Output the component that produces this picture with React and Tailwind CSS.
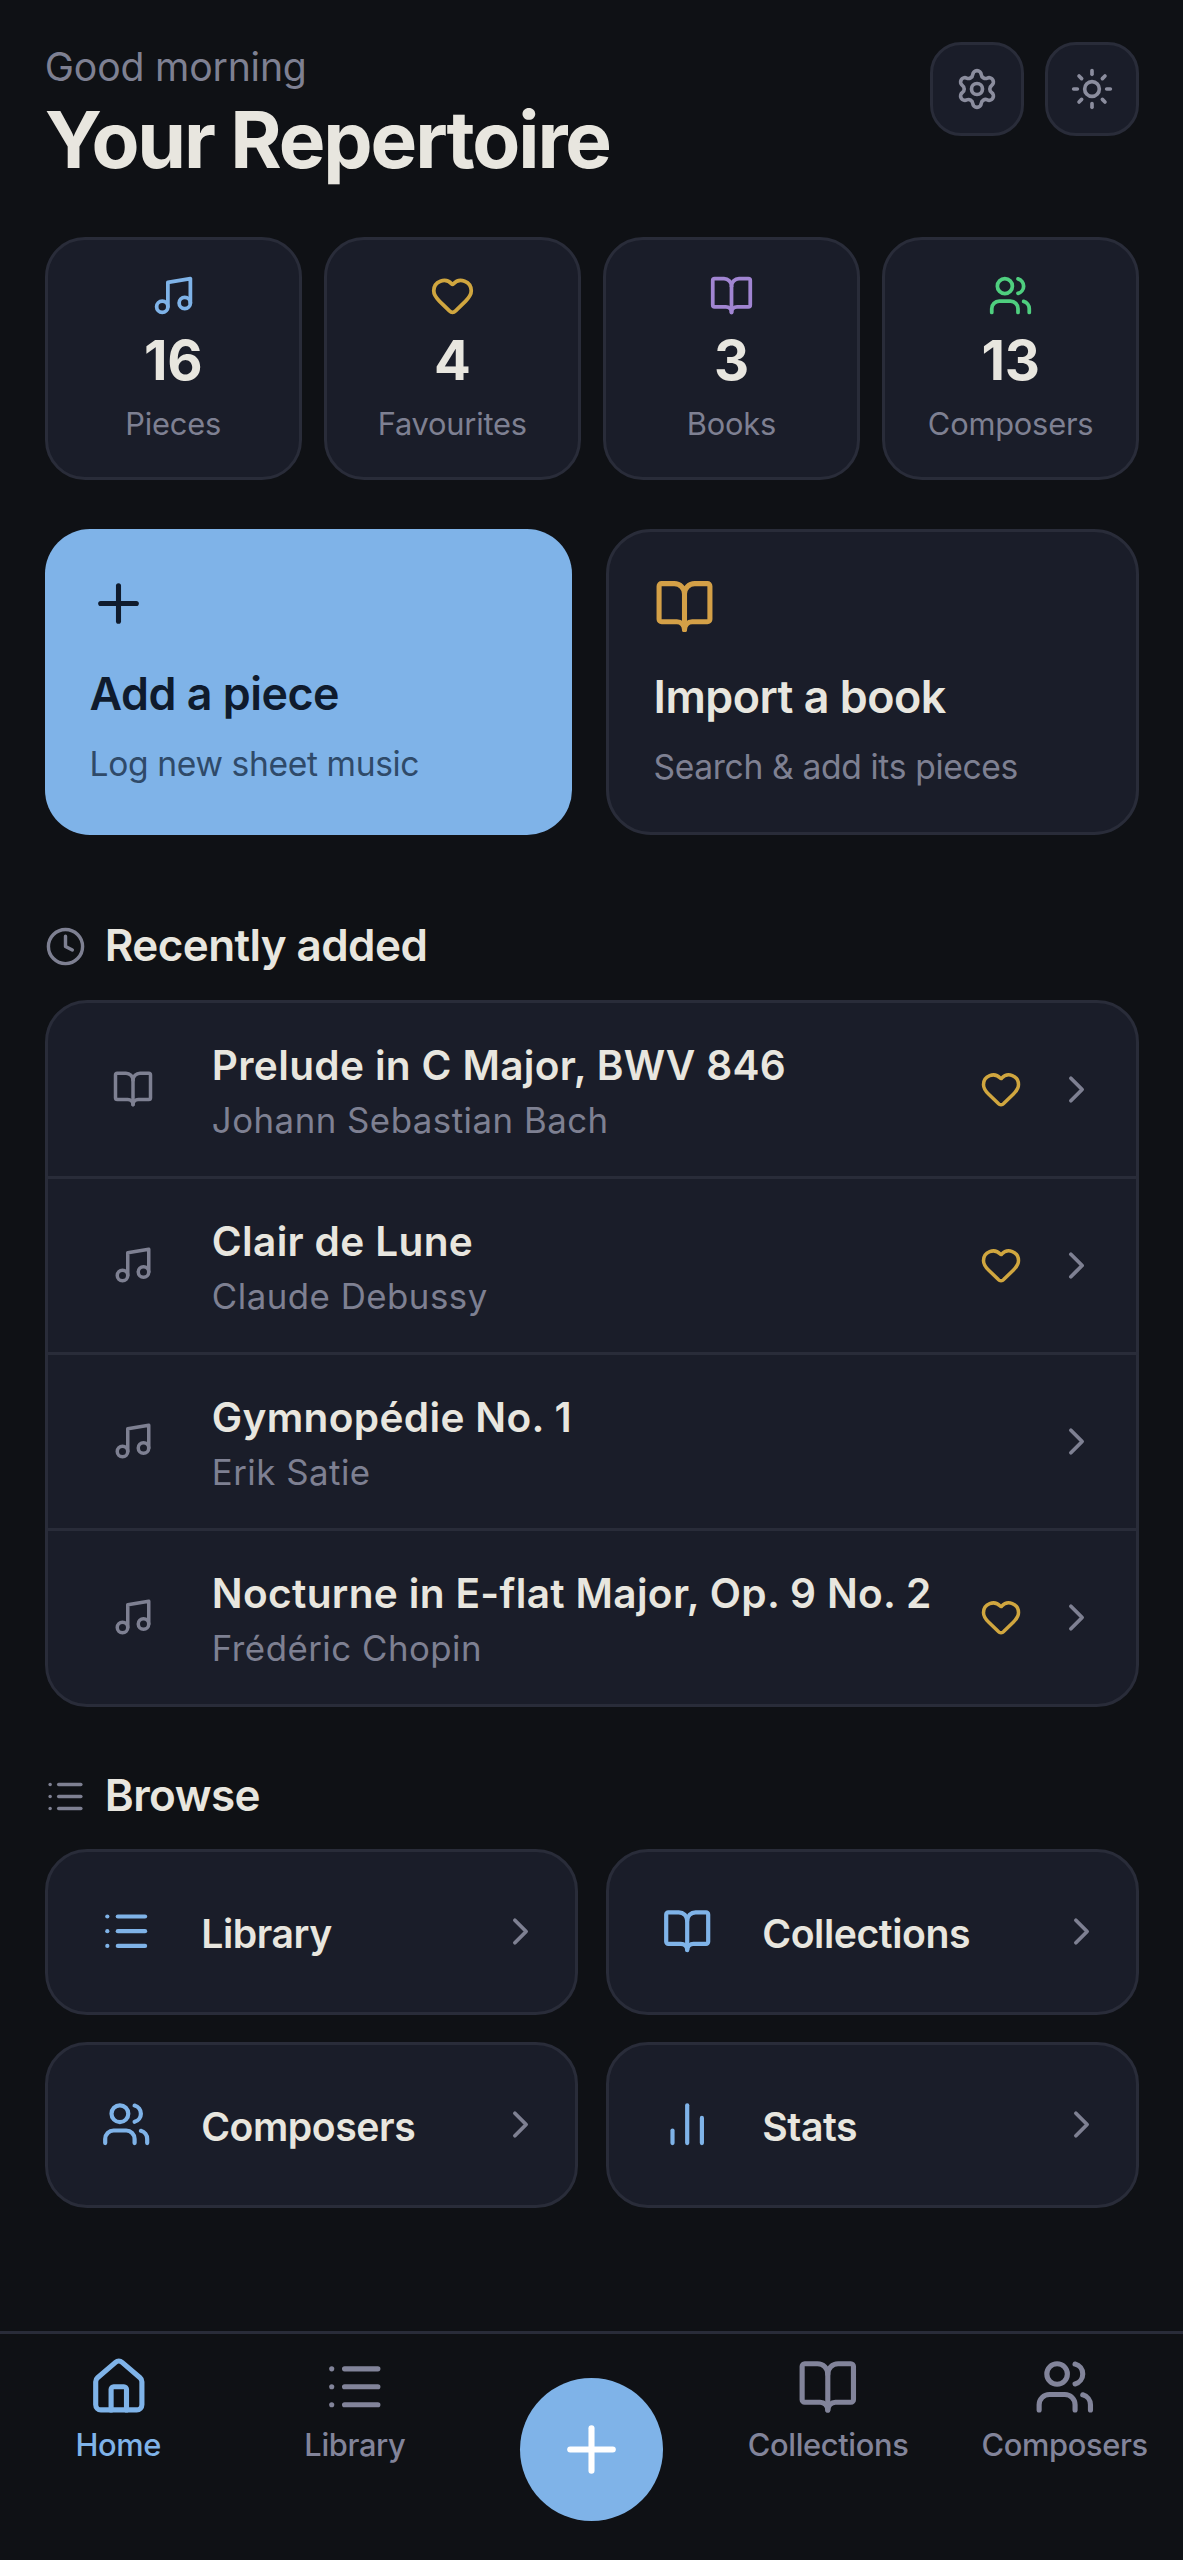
import {
  BookOpen,
  ChartNoAxesColumn,
  ChevronRight,
  Clock,
  Heart,
  House,
  List,
  Music,
  Plus,
  Settings,
  Sun,
  Users,
} from "lucide-react";

const stats = [
  { icon: Music, value: 16, label: "Pieces", color: "text-[#7fb3e8]" },
  { icon: Heart, value: 4, label: "Favourites", color: "text-[#d0a63f]" },
  { icon: BookOpen, value: 3, label: "Books", color: "text-[#a185d2]" },
  { icon: Users, value: 13, label: "Composers", color: "text-[#4fcf7f]" },
];

const recent = [
  { icon: BookOpen, title: "Prelude in C Major, BWV 846", composer: "Johann Sebastian Bach", favourite: true },
  { icon: Music, title: "Clair de Lune", composer: "Claude Debussy", favourite: true },
  { icon: Music, title: "Gymnopédie No. 1", composer: "Erik Satie", favourite: false },
  { icon: Music, title: "Nocturne in E-flat Major, Op. 9 No. 2", composer: "Frédéric Chopin", favourite: true },
];

const browse = [
  { icon: List, label: "Library" },
  { icon: BookOpen, label: "Collections" },
  { icon: Users, label: "Composers" },
  { icon: ChartNoAxesColumn, label: "Stats" },
];

function IconButton({ icon: Icon }) {
  return (
    <button className="flex h-[94px] w-[94px] items-center justify-center rounded-[31px] border-3 border-[#292c39] bg-[#1a1d29] text-[#8b8d9e]">
      <Icon size={44} />
    </button>
  );
}

function SectionTitle({ icon: Icon, children }) {
  return (
    <div className="flex h-[54px] items-center">
      <Icon size={41} className="mt-[3px] text-[#7e8092]" />
      <h2 className="ml-[19px] text-[44px] leading-[54px] font-semibold tracking-[-0.6px]">{children}</h2>
    </div>
  );
}

function Tab({ icon: Icon, label, active }) {
  return (
    <a className={`flex flex-1 flex-col items-center pt-[22px] ${active ? "text-[#7fb3e8]" : "text-[#82849a]"}`}>
      <Icon size={61.6} />
      <span className="mt-2 text-[30.8px] leading-[38px] font-medium tracking-[-0.35px]">{label}</span>
    </a>
  );
}

export default function App() {
  return (
    <div className="flex h-[2560px] w-[1183px] flex-col overflow-hidden bg-[#0f1115] font-['Inter',sans-serif] text-[#e8e6df]">
      <main className="pt-[42px] pr-[44px] pl-[44.8px]">
        <header className="flex h-[195px] items-start justify-between">
          <div>
            <p className="text-[39.2px] leading-[50px] tracking-[-0.2px] text-[#7e8092]">Good morning</p>
            <h1 className="mt-[5px] text-[78.4px] leading-[86px] font-bold tracking-[-0.027em]">Your Repertoire</h1>
          </div>
          <div className="flex gap-[21px]">
            <IconButton icon={Settings} />
            <IconButton icon={Sun} />
          </div>
        </header>

        <section className="grid grid-cols-4 gap-[22.4px]">
          {stats.map(({ icon: Icon, value, label, color }) => (
            <div key={label} className="flex h-[243px] flex-col items-center rounded-[40px] border-3 border-[#292c39] bg-[#1a1d29] pt-[33px]">
              <Icon size={45} className={color} />
              <span className="mt-[14px] text-[54.5px] leading-[56px] font-bold tracking-[-0.2px]">{value}</span>
              <span className="mt-[17px] text-[30.8px] leading-[38px] tracking-[-0.2px] text-[#7e8092]">{label}</span>
            </div>
          ))}
        </section>

        <section className="mt-[48.5px] flex gap-[33.6px]">
          <div className="h-[306px] flex-1 rounded-[45px] bg-[#7fb3e8] p-[44.8px] text-[#0f1b2d]">
            <Plus size={61} className="-ml-[2px]" />
            <h3 className="mt-[33px] text-[44.8px] leading-[54px] font-semibold tracking-[-0.5px]">Add a piece</h3>
            <p className="mt-[23px] text-[33.6px] leading-[40px] tracking-[-0.36px] whitespace-nowrap text-[#2f4a69]">Log new sheet music</p>
          </div>
          <div className="h-[306px] flex-1 rounded-[45px] border-3 border-[#292c39] bg-[#1a1d29] p-[44.8px]">
            <BookOpen size={61} className="text-[#d4a047]" />
            <h3 className="mt-[33px] text-[44.8px] leading-[54px] font-semibold tracking-[-0.5px]">Import a book</h3>
            <p className="mt-[23px] text-[33.6px] leading-[40px] tracking-[-0.33px] whitespace-nowrap text-[#7e8092]">Search &amp; add its pieces</p>
          </div>
        </section>

        <section className="mt-[83px]">
          <SectionTitle icon={Clock}>Recently added</SectionTitle>
          <div className="mt-[28px] overflow-hidden rounded-[42px] border-3 border-[#292c39] bg-[#1a1d29]">
            {recent.map(({ icon: Icon, title, composer, favourite }) => (
              <div key={title} className="flex h-[176px] items-center border-b-3 border-[#292c39] pr-[37px] pl-16 last:h-[173px] last:border-b-0">
                <Icon size={42} className="shrink-0 text-[#7e8092]" />
                <div className="ml-[58px] flex-1 pt-[5px] whitespace-nowrap">
                  <p className="text-[40.6px] leading-[50px] font-semibold tracking-[0.34px]">{title}</p>
                  <p className="mt-[6px] text-[34.8px] leading-[46px] tracking-[0.5px] text-[#7e8092]">{composer}</p>
                </div>
                {favourite && <Heart size={42} className="mr-[32px] shrink-0 text-[#d0a63f]" />}
                <ChevronRight size={45} className="shrink-0 text-[#7e8092]" />
              </div>
            ))}
          </div>
        </section>

        <section className="mt-[61px]">
          <SectionTitle icon={List}>Browse</SectionTitle>
          <div className="mt-[27px] grid grid-cols-2 gap-x-[28px] gap-y-[27px]">
            {browse.map(({ icon: Icon, label }) => (
              <div key={label} className="flex h-[166px] items-center rounded-[42px] border-3 border-[#292c39] bg-[#1a1d29] pr-8 pl-[53px]">
                <Icon size={50.4} className="text-[#7fb3e8]" />
                <span className="ml-[50px] flex-1 pt-[4px] text-[39.2px] leading-[50px] font-semibold tracking-[-0.45px]">{label}</span>
                <ChevronRight size={45} className="text-[#7e8092]" />
              </div>
            ))}
          </div>
        </section>
      </main>

      <nav className="mt-auto flex h-[229px] border-t-3 border-[#292c39]">
        <Tab icon={House} label="Home" active />
        <Tab icon={List} label="Library" />
        <div className="flex flex-1 items-start justify-center pt-[44px]">
          <button className="flex h-[143px] w-[143px] items-center justify-center rounded-full bg-[#7fb3e8] text-white">
            <Plus size={73} />
          </button>
        </div>
        <Tab icon={BookOpen} label="Collections" />
        <Tab icon={Users} label="Composers" />
      </nav>
    </div>
  );
}
